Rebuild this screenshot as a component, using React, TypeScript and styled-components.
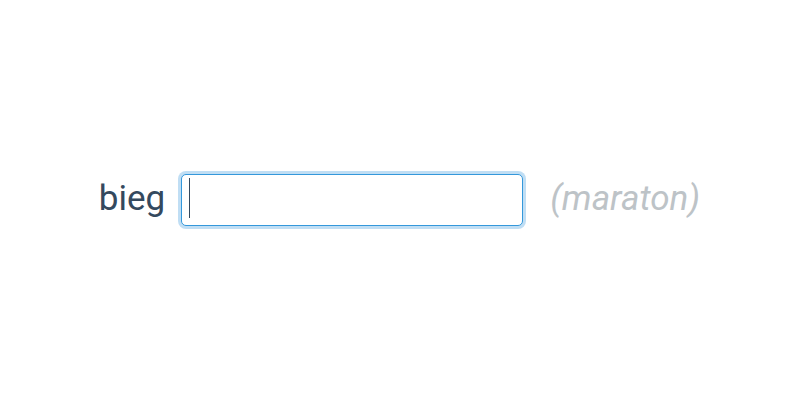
import React from "react";
import styled, { createGlobalStyle } from "styled-components";

const Global = createGlobalStyle`
  html, body { margin: 0; padding: 0; background: #ffffff; }
  body { font-family: Roboto, "Noto Sans", sans-serif; }
`;

const Page = styled.div`
  width: 800px;
  height: 400px;
  display: flex;
  align-items: center;
  justify-content: center;
`;

const Row = styled.div`
  display: flex;
  align-items: center;
  gap: 16px;
  margin-left: -1px;
`;

const Label = styled.label`
  font-family: Roboto, sans-serif;
  font-size: 35px;
  color: #34495e;
  line-height: 1;
  padding-bottom: 4px;
`;

const FieldWrap = styled.div`
  position: relative;
  display: flex;
`;

const Field = styled.input`
  box-sizing: border-box;
  width: 342px;
  height: 52px;
  border: 1px solid #3498db;
  border-radius: 5px;
  box-shadow: 0 0 0 3px #c0def4;
  outline: none;
  padding: 0 8px;
  font-family: Roboto, sans-serif;
  font-size: 35px;
  color: #34495e;
  background: #fff;
`;

const Caret = styled.span`
  position: absolute;
  left: 8px;
  top: 4px;
  width: 1px;
  height: 40px;
  background: #34495e;
  pointer-events: none;
`;

const Hint = styled.span`
  font-family: Roboto, sans-serif;
  font-style: italic;
  font-size: 35px;
  color: #bdc3c7;
  margin-left: 11px;
  padding-bottom: 4px;
  line-height: 1;
`;

export default function App() {
  return (
    <>
      <Global />
      <Page>
        <Row>
          <Label htmlFor="bieg">bieg</Label>
          <FieldWrap>
            <Field id="bieg" type="text" />
            <Caret />
          </FieldWrap>
          <Hint>(maraton)</Hint>
        </Row>
      </Page>
    </>
  );
}
